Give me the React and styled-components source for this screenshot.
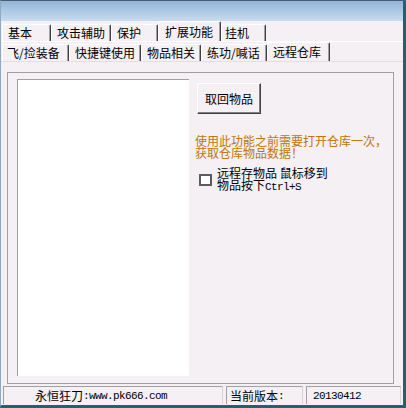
import styled, { createGlobalStyle } from 'styled-components';

const GlobalStyle = createGlobalStyle`
    html, body {
        margin: 0;
        padding: 0;
        background: #f4f0f4;
    }
`;

const outerTabs = [
    { label: '基本', w: 49 },
    { label: '攻击辅助', w: 60 },
    { label: '保护', w: 47 },
    { label: '扩展功能', w: 63, active: true, pad: 6 },
    { label: '挂机', w: 45, pad: 3 },
];

const innerTabs = [
    { label: '飞/捡装备', w: 67, pad: 4 },
    { label: '快捷键使用', w: 72 },
    { label: '物品相关', w: 60 },
    { label: '练功/喊话', w: 66 },
    { label: '远程仓库', w: 63, active: true },
];

const App = () => {
    return (
        <Window>
            <GlobalStyle />
            <TitleBar />

            <TabRow $h={20}>
                {outerTabs.map((t) => (
                    <Tab key={t.label} $w={t.w} $active={t.active} $pad={t.pad} $full={20}>
                        {t.label}
                    </Tab>
                ))}
            </TabRow>

            <OuterBody>
                <TabRow $h={19}>
                    {innerTabs.map((t) => (
                        <Tab key={t.label} $w={t.w} $active={t.active} $pad={t.pad} $full={19}>
                            {t.label}
                        </Tab>
                    ))}
                </TabRow>

                <InnerBody>
                    <Frame>
                        <ListBox />
                        <Side>
                            <Button type='button'>取回物品</Button>
                            <Notice>
                                使用此功能之前需要打开仓库一次，
                                <br />
                                获取仓库物品数据！
                            </Notice>
                            <CheckRow>
                                <CheckBox />
                                <CheckLabel>
                                    远程存物品 鼠标移到
                                    <br />
                                    物品按下<Ascii>Ctrl+S</Ascii>
                                </CheckLabel>
                            </CheckRow>
                        </Side>
                    </Frame>
                </InnerBody>
            </OuterBody>

            <StatusBar>
                <StatusPanel $w={220} $pad={31}>
                    永恒狂刀<Ascii>:www.pk666.com</Ascii>
                </StatusPanel>
                <StatusPanel $w={77} $pad={3}>
                    当前版本<Ascii>:</Ascii>
                </StatusPanel>
                <StatusPanel $w={95} $pad={6}>
                    <Ascii>20130412</Ascii>
                </StatusPanel>
            </StatusBar>
        </Window>
    );
};

const Window = styled.div`
    width: 406px;
    height: 408px;
    box-sizing: border-box;
    display: flex;
    flex-direction: column;
    background: #f4f0f4;
    border-top: 1px solid #4a5c70;
    border-left: 1px solid #8ea9c4;
    border-right: 3px solid #25606e;
    border-bottom: 3px solid #25606e;
    font-family: 'Noto Sans CJK SC', 'Noto Sans', sans-serif;
    font-size: 12px;
    color: #000;
    overflow: hidden;
`;

const TitleBar = styled.div`
    height: 20px;
    flex-shrink: 0;
    background: linear-gradient(#92b5d9, #c8dcef);
`;

const TabRow = styled.div`
    height: ${({ $h }) => $h}px;
    flex-shrink: 0;
    display: flex;
    align-items: flex-end;
    padding-left: 1px;
`;

const Tab = styled.div`
    box-sizing: border-box;
    width: ${({ $w }) => $w}px;
    height: ${({ $active, $full }) => ($active ? $full : 17)}px;
    display: flex;
    align-items: center;
    padding-left: ${({ $pad }) => $pad ?? 5}px;
    border-top: 1px solid #fff;
    border-left: 1px solid #fff;
    border-right: 1px solid #404040;
    border-radius: 2px 2px 0 0;
    box-shadow: inset -1px 0 #a0a0a0;
    line-height: 12px;
    white-space: nowrap;
`;

const OuterBody = styled.div`
    flex: 1;
    display: flex;
    flex-direction: column;
    border-top: 1px solid #fff;
`;

const InnerBody = styled.div`
    border-top: 1px solid #e2dee2;
    padding: 10px 9px 0 6px;
`;

const Frame = styled.div`
    box-sizing: border-box;
    height: 312px;
    display: flex;
    align-items: flex-start;
    padding: 6px 0 0 9px;
    border: 1px solid #a0a0a0;
`;

const ListBox = styled.div`
    box-sizing: border-box;
    width: 172px;
    height: 297px;
    flex-shrink: 0;
    background: #fff;
    border-top: 1px solid #a0a0a0;
    border-left: 1px solid #a0a0a0;
`;

const Side = styled.div`
    display: flex;
    flex-direction: column;
    align-items: flex-start;
    margin-left: 6px;
    padding-top: 4px;
`;

const Button = styled.button`
    box-sizing: border-box;
    width: 64px;
    height: 31px;
    margin-left: 2px;
    padding: 0;
    background: #f4f0f4;
    border: 1px solid;
    border-color: #fff #404040 #404040 #fff;
    box-shadow: inset -1px -1px #808080;
    font: inherit;
    line-height: 12px;
    color: #000;
`;

const Notice = styled.div`
    margin-top: 21px;
    color: #c27406;
    line-height: 12px;
    white-space: nowrap;
`;

const CheckRow = styled.div`
    display: flex;
    align-items: center;
    gap: 5px;
    margin: 8px 0 0 4px;
`;

const CheckBox = styled.span`
    box-sizing: border-box;
    width: 13px;
    height: 12px;
    background: #fff;
    border: 2px solid #5c5c5c;
`;

const CheckLabel = styled.div`
    line-height: 12px;
    white-space: nowrap;
`;

const Ascii = styled.span`
    font-family: 'Liberation Mono', monospace;
    font-size: 11px;
    letter-spacing: -0.6px;
`;

const StatusBar = styled.div`
    height: 18px;
    flex-shrink: 0;
    display: flex;
    gap: 3px;
    margin: 2px 0 1px;
    padding-left: 2px;
`;

const StatusPanel = styled.div`
    box-sizing: border-box;
    width: ${({ $w }) => $w}px;
    display: flex;
    align-items: center;
    padding-left: ${({ $pad }) => $pad}px;
    border-top: 1px solid #a0a0a0;
    border-left: 1px solid #a0a0a0;
    border-right: 1px solid #d8d4d8;
    line-height: 12px;
    white-space: nowrap;
`;

export default App;
